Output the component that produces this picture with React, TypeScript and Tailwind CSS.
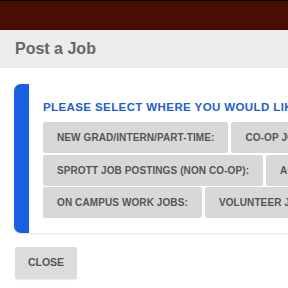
const rows: string[][] = [
  ["NEW GRAD/INTERN/PART-TIME:", "CO-OP JOBS:"],
  ["SPROTT JOB POSTINGS (NON CO-OP):", "ACADEMIC JOBS:"],
  ["ON CAMPUS WORK JOBS:", "VOLUNTEER JOBS:"],
];

function ChoiceBtn({ label }: { label: string }) {
  return (
    <button className="h-[31px] shrink-0 whitespace-nowrap rounded-[2px] bg-[#d8d8d8] px-[14px] text-[10px] font-bold text-[#555] tracking-[0.1px]">
      {label}
    </button>
  );
}

export default function App() {
  return (
    <div className="h-[288px] w-[288px] overflow-hidden bg-white font-['Liberation_Sans',Arial,sans-serif]">
      {/* site bar */}
      <div className="h-[30px] border-t border-black bg-[#480d03]" />

      {/* dialog header */}
      <div className="flex h-[38px] items-center bg-[#ececec] pl-[15px]">
        <h1 className="text-[16px] font-bold text-[#666]">Post a Job</h1>
      </div>

      {/* dialog body */}
      <div className="w-[600px] pl-[14px] pt-[16px]">
        <div className="rounded-l-[7px] border-l-[15px] border-[#1a5fe2] bg-white pb-[15px] pl-[14px] pt-[16px] shadow-[0_1px_2px_rgba(0,0,0,0.12)]">
          <p className="text-[11.5px] font-bold leading-[14px] tracking-[0.4px] text-[#2160c9]">
            PLEASE SELECT WHERE YOU WOULD LIKE TO POST YOUR JOB
          </p>
          <div className="mt-[8px] flex flex-col gap-[1.5px]">
            {rows.map((r) => (
              <div key={r[0]} className="flex gap-[3px]">
                {r.map((l) => (
                  <ChoiceBtn key={l} label={l} />
                ))}
              </div>
            ))}
          </div>
        </div>

        <button className="ml-[1px] mt-[14px] h-[32px] w-[62px] rounded-[2px] bg-[#dcdcdc] text-[10.5px] font-bold text-[#555] shadow-[0_1px_1px_rgba(0,0,0,0.08)]">
          CLOSE
        </button>
      </div>
    </div>
  );
}
